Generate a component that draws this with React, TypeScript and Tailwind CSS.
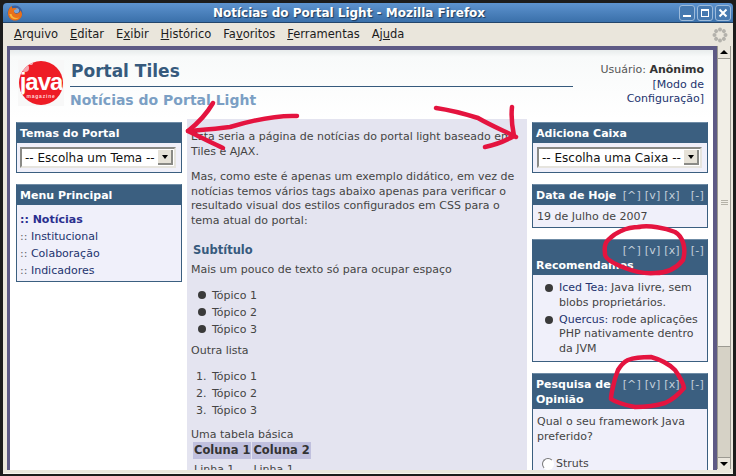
import React from "react";

const font = { fontFamily: '"DejaVu Sans", sans-serif' };

const menus = [
  ["A", "rquivo", ""],
  ["E", "ditar", ""],
  ["E", "x", "ibir"],
  ["H", "istórico", ""],
  ["Fa", "v", "oritos"],
  ["F", "erramentas", ""],
  ["Aj", "u", "da"],
];

function MenuItem({ item, index }: { item: string[]; index: number }) {
  // the mnemonic letter sits first or in the middle of the label
  const first = index === 0 || index === 1 || index === 3 || index === 5;
  if (first) {
    return (
      <span>
        <span className="underline">{item[0]}</span>
        {item[1]}
      </span>
    );
  }
  return (
    <span>
      {item[0]}
      <span className="underline">{item[1]}</span>
      {item[2]}
    </span>
  );
}

function Controls() {
  return (
    <span className="text-[11px] font-normal text-[#c3cfdb] whitespace-nowrap tracking-[0.2px]">
      <span>[^]</span> <span>[v]</span> <span>[x]</span>
      <span className="ml-[11px]">[-]</span>
    </span>
  );
}

function Box({
  title,
  controls,
  wrap,
  children,
}: {
  title: string;
  controls?: boolean;
  wrap?: boolean;
  children: React.ReactNode;
}) {
  return (
    <div className="border border-[#3b5f80] border-t-[#6f8ca6] bg-[#f0f0fa]">
      {wrap ? (
        <div className="bg-[#3b5f80] pl-[3px] pr-[3px] pt-[4px] pb-[2px] text-[11px] font-bold text-white">
          <div className="text-right leading-[14px]">
            <Controls />
          </div>
          <div className="leading-[15px]">{title}</div>
        </div>
      ) : (
        <div className="bg-[#3b5f80] pl-[3px] pr-[3px] h-[20px] flex items-center justify-between text-[11px] leading-[15px] font-bold text-white whitespace-nowrap">
          <span>{title}</span>
          {controls && <Controls />}
        </div>
      )}
      {children}
    </div>
  );
}

function FakeSelect({ label }: { label: string }) {
  return (
    <div className="flex items-center justify-between h-[21px] bg-white border-2 border-[#8a8a86] border-r-[#e6e4de] border-b-[#e6e4de] text-[12px] text-[#111] pl-[3px] pr-[1px] whitespace-nowrap">
      <span>{label}</span>
      <span className="flex items-center justify-center w-[15px] h-[15px] bg-[#e6e2d8] border-r-2 border-b-2 border-[#8a8a86]">
        <span className="w-0 h-0 border-x-[3px] border-x-transparent border-t-[4px] border-t-black" />
      </span>
    </div>
  );
}

function Bullet({ top }: { top: string }) {
  return (
    <span
      className={`absolute left-[-14px] ${top} w-[8px] h-[8px] rounded-full bg-[#3a3a3a]`}
    />
  );
}

function FirefoxIcon() {
  return (
    <svg width="16" height="16" viewBox="0 0 16 16" className="shrink-0">
      <circle cx="8" cy="8" r="7.5" fill="#3a5f9e" />
      <circle cx="9.5" cy="5.500" r="2.600" fill="#7fa6d6" />
      <path d="M1 8.500C1 4 3.600 1.400 5 1 4.600 2.200 5 3 5.600 3.400 7 2.600 9.400 3 10 4.400 8.600 3.800 7.200 4.600 7 6c-.2 1.800 1.600 3 3.400 2.600C12 8.200 13 7 13.400 5.600 14.600 7 15.200 8.600 15 10c-.6 3.400-3.600 5.600-7 5.600-3.800 0-7-3-7-7.100z" fill="#e8701a" />
      <path d="M2.500 9c.4 3 2.800 5.200 5.600 5.200 1.600 0 3-.6 4-1.600-3.400 1-7-.4-7.600-3.600z" fill="#f6b73c" />
    </svg>
  );
}

function JavaLogo() {
  return (
    <div className="w-[46px] h-[46px] shrink-0 bg-[#f8f8f8] flex items-center justify-center ml-[2px]">
      <div className="relative w-[44px] h-[44px] rounded-full bg-[#ee1c25] overflow-hidden">
        <span
          className="absolute left-0 right-0 top-[11px] text-center text-[24px] leading-[20px] font-bold text-white tracking-[-1px] whitespace-nowrap"
          style={{ fontFamily: '"Liberation Sans", sans-serif' }}
        >
          java
        </span>
        <span
          className="absolute left-0 right-0 top-[32px] text-center text-[5px] leading-[6px] font-bold text-[#ffd6d6] tracking-[0.8px]"
          style={{ fontFamily: '"Liberation Sans", sans-serif' }}
        >
          magazine
        </span>
        <span className="absolute left-[2px] top-[3px] w-[8px] h-[8px] bg-[#f7a8b0] rounded-full" />
        <span className="absolute left-[10px] top-[0px] w-[4px] h-[4px] bg-[#f7c0c6] rounded-full" />
      </div>
    </div>
  );
}

function Annotations() {
  return (
    <svg
      width="736"
      height="476"
      viewBox="0 0 736 476"
      className="absolute left-0 top-0 pointer-events-none"
      fill="none"
      stroke="#e4143f"
      strokeWidth="4.5"
      strokeLinecap="round"
      strokeLinejoin="round"
    >
      {/* left arrow */}
      <path d="M297 116C275 115 250 121 230 127C215 129 200 130 188 131" />
      <path d="M213 103C206 115 197 124 188 131C198 136 212 143 223 148" />
      {/* right arrow */}
      <path d="M436 108C450 110 462 113 478 118C490 125 504 131 516 137" />
      <path d="M512 107C511 116 512 126 514 136C505 141 495 145 485 147" />
      {/* first circle */}
      <path d="M638 227C650 225 665 228 675 232C684 237 686 250 683 260C675 270 665 273 655 273C640 274 630 270 625 268C612 263 604 258 605 253C604 246 605 243 608 240C612 236 616 233 621 231C627 228 632 227 640 227" />
      {/* second circle */}
      <path d="M628 360C636 357 645 357 651 357C662 360 670 365 675 370C680 377 683 382 684 388C678 395 672 400 665 403C655 406 645 407 635 407C625 405 617 403 611 399C611 395 612 391 613 387C614 381 616 375 618 370C621 365 624 362 628 360" />
    </svg>
  );
}

export default function App() {
  return (
    <div className="relative w-[736px] h-[476px] overflow-hidden bg-[#1c1c1c] text-[11px] text-[#444]" style={font}>
      {/* Title bar */}
      <div className="mx-[3px] mt-[3px] h-[20px] bg-gradient-to-b from-[#5d93cf] to-[#3a70aa] rounded-t-[4px] flex items-center pl-[4px] pr-[2px] border-b border-[#23456b]">
        <FirefoxIcon />
        <div className="flex-1 pr-[4px] text-center text-[12px] font-bold text-white [text-shadow:1px_1px_1px_#1d3a5c]">
          Notícias do Portal Light - Mozilla Firefox
        </div>
        <div className="flex gap-[2px]">
          {["min", "max", "close"].map((b) => (
            <span
              key={b}
              className="w-[16px] h-[16px] rounded-[3px] border border-[#9dbbdb] bg-[#4679b0] flex items-center justify-center"
            >
              {b === "min" && <span className="w-[8px] h-[2px] bg-white mt-[7px]" />}
              {b === "max" && <span className="w-[8px] h-[8px] border border-white border-t-2" />}
              {b === "close" && (
                <svg width="10" height="10" viewBox="0 0 10 10">
                  <path d="M1.500 1.500l7 7M8.500 1.500l-7 7" stroke="#fff" strokeWidth="2" />
                </svg>
              )}
            </span>
          ))}
        </div>
      </div>

      {/* Menu bar */}
      <div className="mx-[3px] h-[23px] bg-[#eae6dc] flex items-center pl-[11px] pr-[5px] text-[11.500px] text-[#1c1c1c] gap-[12px]">
        {menus.map((m, i) => (
          <MenuItem key={i} item={m} index={i} />
        ))}
        <svg width="16" height="16" viewBox="0 0 16 16" className="ml-auto">
          {[0, 45, 90, 135, 180, 225, 270, 315].map((a) => (
            <circle key={a} cx="8" cy="2.500" r="2" fill="#b4b2ac" transform={`rotate(${a} 8 8)`} />
          ))}
        </svg>
      </div>

      {/* Viewport */}
      <div className="mx-[3px] h-[428px] bg-[#eae6dc] flex items-start pl-[4px] pr-[2px] border-b border-[#f6f4ee]">
        <div className="w-[710px] h-[424px] bg-[#5e5a85] pl-[3px] pr-[4px] pt-[4px]">
          <div className="h-[420px] overflow-hidden bg-white">
            {/* Header */}
            <div className="flex pl-[6px] pr-[9px] pt-[10px] h-[69px] bg-gradient-to-b from-[#e8ecec] via-[#f8fafa] via-10% to-white">
              <JavaLogo />
              <div className="ml-[6px] w-[503px] shrink-0">
                <div className="text-[17px] leading-[20px] font-bold text-[#365a7d] h-[27px] pt-[1px] border-b border-[#365a7d] pl-[1px] w-[503px]">
                  Portal Tiles
                </div>
                <div className="text-[14px] leading-[18px] font-bold text-[#7b9fc4] pt-[4px]">
                  Notícias do Portal Light
                </div>
              </div>
              <div className="flex-1 text-right leading-[14.500px] text-[11px] pt-[3px] whitespace-nowrap text-[#555]">
                Usuário: <b className="text-[#333]">Anônimo</b>
                <div className="text-[#23336e]">[Modo de</div>
                <div className="text-[#23336e]">Configuração]</div>
              </div>
            </div>

            <div className="flex pl-[6px] pr-[5px] gap-[5px]">
              {/* Left column */}
              <div className="w-[166px] shrink-0 pt-[3px] flex flex-col gap-[11px]">
                <Box title="Temas do Portal">
                  <div className="pl-[3px] pr-[5px] pt-[4px] pb-[4px]">
                    <FakeSelect label="-- Escolha um Tema --" />
                  </div>
                </Box>
                <Box title="Menu Principal">
                  <div className="px-[3px] pt-[6px] pb-[2px] text-[#23336e] leading-[17px] text-[11px]">
                    <div className="font-bold text-[#2b2f8f]">:: Notícias</div>
                    <div><span className="text-[#666]">::</span> Institucional</div>
                    <div><span className="text-[#666]">::</span> Colaboração</div>
                    <div><span className="text-[#666]">::</span> Indicadores</div>
                  </div>
                </Box>
              </div>

              {/* Center column */}
              <div className="w-[340px] shrink-0 bg-[#e4e4f0] px-[4px] pt-[11px] h-[351px] overflow-hidden leading-[14.500px]">
                <p>Esta seria a página de notícias do portal light baseado em Tiles e AJAX.</p>
                <p className="mt-[11px]">
                  Mas, como este é apenas um exemplo didático, em vez de notícias temos vários tags abaixo apenas para verificar o resultado visual dos estilos configurados em CSS para o tema atual do portal:
                </p>
                <h3 className="mt-[14px] ml-[2px] text-[11.500px] leading-[16px] font-bold text-[#365a7d]">Subtítulo</h3>
                <p className="mt-[5px]">Mais um pouco de texto só para ocupar espaço</p>
                <ul className="mt-[9px] pl-[21px] leading-[17px]">
                  <li className="relative"><Bullet top="top-[4px]" />Tópico 1</li>
                  <li className="relative"><Bullet top="top-[4px]" />Tópico 2</li>
                  <li className="relative"><Bullet top="top-[4px]" />Tópico 3</li>
                </ul>
                <p className="mt-[6px]">Outra lista</p>
                <ol className="mt-[10px] pl-[5px] leading-[17px]">
                  <li><span className="inline-block w-[16px]">1.</span>Tópico 1</li>
                  <li><span className="inline-block w-[16px]">2.</span>Tópico 2</li>
                  <li><span className="inline-block w-[16px]">3.</span>Tópico 3</li>
                </ol>
                <p className="mt-[9px]">Uma tabela básica</p>
                <table className="mt-[-2px] ml-[1px] border-separate border-spacing-[1px]">
                  <thead>
                    <tr>
                      <th className="bg-[#c0c0de] px-[1px] h-[17px] text-[#333] text-left font-bold text-[11.500px]">Coluna 1</th>
                      <th className="bg-[#c0c0de] px-[1px] h-[17px] text-[#333] text-left font-bold text-[11.500px]">Coluna 2</th>
                    </tr>
                  </thead>
                  <tbody>
                    <tr>
                      <td className="px-[1px] pt-[3px]">Linha 1</td>
                      <td className="px-[1px] pt-[3px]">Linha 1</td>
                    </tr>
                  </tbody>
                </table>
              </div>

              {/* Right column */}
              <div className="w-[176px] shrink-0 pt-[3px] flex flex-col gap-[11px]">
                <Box title="Adiciona Caixa">
                  <div className="pl-[4px] pr-[5px] pt-[4px] pb-[4px]">
                    <FakeSelect label="-- Escolha uma Caixa --" />
                  </div>
                </Box>
                <Box title="Data de Hoje" controls>
                  <div className="px-[4px] pt-[4px] pb-[3px] leading-[15px]">19 de Julho de 2007</div>
                </Box>
                <Box title="Recomendamos" controls wrap>
                  <ul className="pl-[26px] pr-[3px] pt-[6px] pb-[5px] leading-[14.500px]">
                    <li className="relative mb-[2.500px]">
                      <Bullet top="top-[3px]" />
                      <span className="text-[#23336e]">Iced Tea:</span> Java livre, sem blobs proprietários.
                    </li>
                    <li className="relative">
                      <Bullet top="top-[3px]" />
                      <span className="text-[#23336e]">Quercus:</span> rode aplicações PHP nativamente dentro da JVM
                    </li>
                  </ul>
                </Box>
                <div className="border border-[#3b5f80] border-t-[#6f8ca6] bg-[#f0f0fa] h-[200px]">
                  <div className="bg-[#3b5f80] pl-[3px] pr-[3px] pt-[4px] pb-[2px] text-[11px] leading-[14.500px] font-bold text-white flex justify-between">
                    <span>Pesquisa de Opinião</span>
                    <span className="shrink-0"><Controls /></span>
                  </div>
                  <div className="px-[4px] pt-[6px] leading-[14.500px] text-[#444]">
                    <p>Qual o seu framework Java preferido?</p>
                    <div className="mt-[13px] ml-[5px] flex items-center gap-[2px]">
                      <span className="w-[12px] h-[12px] rounded-full bg-white border border-t-[#777] border-l-[#777] border-r-white border-b-white" />
                      Struts
                    </div>
                  </div>
                </div>
              </div>
            </div>
          </div>
        </div>

        {/* Scrollbar */}
        <div className="w-[14px] h-[423px] flex flex-col bg-[#d6d2c6] border-x border-[#9c9a92]">
          <div className="h-[13px] bg-[#eae6dc] flex items-center justify-center border-b border-[#9c9a92]">
            <span className="w-0 h-0 border-x-[4px] border-x-transparent border-b-[4px] border-b-black" />
          </div>
          <div className="h-[288px] bg-[#f1eee6] border-b border-[#9c9a92] flex flex-col items-center justify-center gap-[1px]">
            <span className="w-[7px] h-px bg-[#b5b2a8]" />
            <span className="w-[7px] h-px bg-[#b5b2a8]" />
            <span className="w-[7px] h-px bg-[#b5b2a8]" />
          </div>
          <div className="flex-1" />
          <div className="h-[12px] bg-[#eae6dc] flex items-center justify-center border-t border-[#9c9a92]">
            <span className="w-0 h-0 border-x-[4px] border-x-transparent border-t-[4px] border-t-black" />
          </div>
        </div>
      </div>
      <Annotations />
    </div>
  );
}
